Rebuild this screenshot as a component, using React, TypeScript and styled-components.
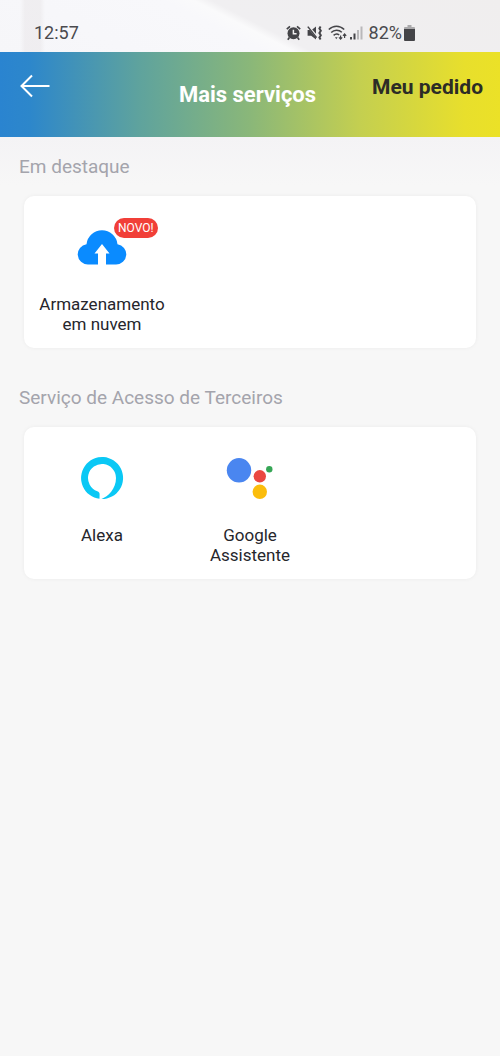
import React from "react";
import styled, { createGlobalStyle } from "styled-components";

const GlobalStyle = createGlobalStyle`
  *, *::before, *::after { box-sizing: border-box; }
  body {
    margin: 0;
    background: #f7f7f7;
    font-family: Roboto, "Liberation Sans", sans-serif;
    color: #26262c;
  }
`;

const Screen = styled.div`
  display: flex;
  flex-direction: column;
  min-height: 100vh;
`;

const StatusBar = styled.div`
  display: flex;
  align-items: center;
  justify-content: space-between;
  height: 52px;
  padding: 14px 85px 0 34px;
  font-size: 18px;
  line-height: 24px;
  color: #4a4a4e;
  background:
    linear-gradient(90deg, transparent 4%, rgba(232, 229, 231, 0.5) 5%, rgba(232, 229, 231, 0.5) 8%, transparent 9%),
    linear-gradient(27deg, #f6f6f9 0%, #f8f8fb 44%, #fafafb 49%, #f0eff1 52%, #f0eeee 100%);
`;

const StatusIcons = styled.div`
  display: flex;
  align-items: center;
  gap: 6px;
`;

const Cluster = styled.div`
  display: flex;
  align-items: center;
  gap: 2px;
`;

const Header = styled.header`
  display: grid;
  grid-template-columns: 1fr auto 1fr;
  height: 85px;
  padding: 0 17px 0 12px;
  background: linear-gradient(90deg, #2a84d0 0%, #2d87cb 6%, #5fa39d 28%, #8ab779 50%, #c4cf50 72%, #e8df2c 93%, #ebe127 100%);
`;

const BackButton = styled.button`
  display: flex;
  align-items: center;
  justify-self: start;
  height: 68px;
  padding: 0 8px;
  border: 0;
  background: none;
  color: #fff;
  cursor: pointer;
`;

const Title = styled.h1`
  align-self: center;
  margin: 0;
  font-size: 22px;
  line-height: 28px;
  font-weight: 700;
  color: #fff;
`;

const OrderLink = styled.a`
  justify-self: end;
  font-size: 21px;
  line-height: 70px;
  font-weight: 700;
  white-space: nowrap;
  color: #2c2c26;
  text-decoration: none;
`;

const Content = styled.main`
  display: flex;
  flex-direction: column;
  flex: 1;
  gap: 38px;
  padding: 18px 24px 24px;
  background: linear-gradient(180deg, #f4f3f5 0, #f7f7f7 48px);
`;

const Section = styled.section`
  display: flex;
  flex-direction: column;
  gap: 17px;
`;

const SectionTitle = styled.h2`
  margin: 0 0 0 -5px;
  font-size: 19px;
  line-height: 24px;
  font-weight: 400;
  color: #a4a4ac;
`;

const Card = styled.div`
  display: grid;
  grid-template-columns: repeat(3, 1fr);
  min-height: 152px;
  padding: 20px 4px 13px;
  border-radius: 10px;
  background: #fff;
  box-shadow: 0 0 4px rgba(0, 0, 0, 0.05);
`;

const Service = styled.a`
  display: flex;
  flex-direction: column;
  align-items: center;
  gap: 14px;
  font-size: 17px;
  line-height: 20px;
  text-align: center;
  color: #26262c;
  text-decoration: none;
`;

const IconBox = styled.span`
  position: relative;
  display: block;
  width: 64px;
  height: 64px;
`;

const Label = styled.span`
  max-width: 130px;
`;

const Badge = styled.span`
  position: absolute;
  top: 2px;
  left: 44px;
  padding: 0 4px;
  border-radius: 10px;
  font-size: 12px;
  line-height: 20px;
  color: #fff;
  background: #f13f38;
`;

const AlarmIcon = () => (
  <svg width="15" height="16" viewBox="0 0 15 16" fill="none" stroke="#444448" aria-hidden="true">
    <circle cx="7.5" cy="8.2" r="6" fill="#444448" stroke="none" />
    <path d="M7.400 4.800v4h3.200" stroke="#f1f0f1" strokeWidth="1.500" />
    <path d="M.8 4.200 4 1.400M14.200 4.200 11 1.400M3.400 12.600 1.800 14.800M11.600 12.600l1.600 2.200" strokeWidth="1.700" />
  </svg>
);

const MuteIcon = () => (
  <svg width="15" height="16" viewBox="0 0 15 16" fill="none" stroke="#444448" aria-hidden="true">
    <path d="M5.200 4.600 9 1.400v7.400Z" fill="#444448" stroke="none" />
    <path d="M.6 5h2l6.400 7.600v2L4.200 10.800H.6Z" fill="#444448" stroke="none" />
    <path d="M.8 1.600 9.600 12.600" strokeWidth="1.500" />
    <path d="M13.600 1.600 12.400 3.600 13.800 5.800 12.400 8 13.800 10.200 12.400 12.400 13.600 14.400" strokeWidth="2" />
  </svg>
);

const WifiIcon = () => (
  <svg width="19" height="16" viewBox="0 0 19 16" fill="none" stroke="#444448" aria-hidden="true">
    <path d="M.8 4.600C5.200 0 11.800 0 16.200 4.600" strokeWidth="1.500" />
    <path d="M3.200 7.600c3-3.200 7.600-3.200 10.600-.4" strokeWidth="1.500" />
    <path d="M5.600 10.400c1.800-1.700 4-1.700 5.600-.4" strokeWidth="1.500" />
    <path d="M7 12.200h2.600l-1.300 2z" fill="#444448" stroke="none" />
    <path d="M12.600 10.400v3.600M11 12.400l1.600 1.800 1.600-1.800M16.600 13V9M15 10.800 16.600 9l1.600 1.800" strokeWidth="1.200" />
  </svg>
);

const SignalIcon = () => (
  <svg width="14" height="16" viewBox="0 0 14 16" aria-hidden="true">
    <path d="M1 12h2v2.500H1zM4.500 8.500h2v6h-2z" fill="#444448" />
    <path d="M8 5h2v9.500H8zM11.500 1.500h2v13h-2z" fill="#b9b8ba" />
  </svg>
);

const BatteryIcon = () => (
  <svg width="11" height="16" viewBox="0 0 11 16" aria-hidden="true">
    <path d="M3.500 0h4v2H10q1 0 1 1v2H0V3q0-1 1-1h2.500z" fill="#aaa9ab" />
    <path d="M0 4h11v11q0 1-1 1H1q-1 0-1-1z" fill="#444448" />
  </svg>
);

const BackIcon = () => (
  <svg width="30" height="24" viewBox="0 0 30 24" fill="none" stroke="currentColor" strokeWidth="2" aria-hidden="true">
    <path d="M29.500 12H2M12 1.500 1.500 12 12 22.500" />
  </svg>
);

const CloudIcon = () => (
  <svg width="64" height="64" viewBox="0 0 64 64" aria-hidden="true">
    <path
      d="M18 48.500A10.200 10.200 0 0 1 16.500 28.200A15.600 15.600 0 0 1 47.500 28.200A10.200 10.200 0 0 1 46 48.500H36V37.500H39.500L32 28 24.500 37.500H28V48.500Z"
      fill="#0a8bff"
    />
  </svg>
);

const AlexaIcon = () => (
  <svg width="64" height="64" viewBox="0 0 64 64" aria-hidden="true">
    <path
      d="M29.500 51.850A21 21 0 1 1 31.500 52C38 49.500 46 42 46 31A14 14 0 1 0 27.300 44.200C29 44.900 29.600 45.600 29.600 47.200Z"
      fill="#0ac8f5"
    />
  </svg>
);

const AssistantIcon = () => (
  <svg width="64" height="64" viewBox="0 0 64 64" aria-hidden="true">
    <circle cx="21" cy="23.300" r="12.200" fill="#4a86f0" />
    <circle cx="41.800" cy="29.300" r="6.200" fill="#ea4841" />
    <circle cx="51.300" cy="22.300" r="3.200" fill="#36a656" />
    <circle cx="41.800" cy="44.800" r="7.200" fill="#fbbd0c" />
  </svg>
);

export default function App() {
  return (
    <Screen>
      <GlobalStyle />
      <StatusBar>
        <span>12:57</span>
        <StatusIcons>
          <AlarmIcon />
          <MuteIcon />
          <Cluster>
            <WifiIcon />
            <SignalIcon />
          </Cluster>
          <Cluster>
            <span>82%</span>
            <BatteryIcon />
          </Cluster>
        </StatusIcons>
      </StatusBar>
      <Header>
        <BackButton type="button" aria-label="Voltar">
          <BackIcon />
        </BackButton>
        <Title>Mais serviços</Title>
        <OrderLink href="#pedido">Meu pedido</OrderLink>
      </Header>
      <Content>
        <Section>
          <SectionTitle>Em destaque</SectionTitle>
          <Card>
            <Service href="#nuvem">
              <IconBox>
                <CloudIcon />
                <Badge>NOVO!</Badge>
              </IconBox>
              <Label>Armazenamento em nuvem</Label>
            </Service>
          </Card>
        </Section>
        <Section>
          <SectionTitle>Serviço de Acesso de Terceiros</SectionTitle>
          <Card>
            <Service href="#alexa">
              <IconBox>
                <AlexaIcon />
              </IconBox>
              <Label>Alexa</Label>
            </Service>
            <Service href="#assistente">
              <IconBox>
                <AssistantIcon />
              </IconBox>
              <Label>
                Google
                <br />
                Assistente
              </Label>
            </Service>
          </Card>
        </Section>
      </Content>
    </Screen>
  );
}
